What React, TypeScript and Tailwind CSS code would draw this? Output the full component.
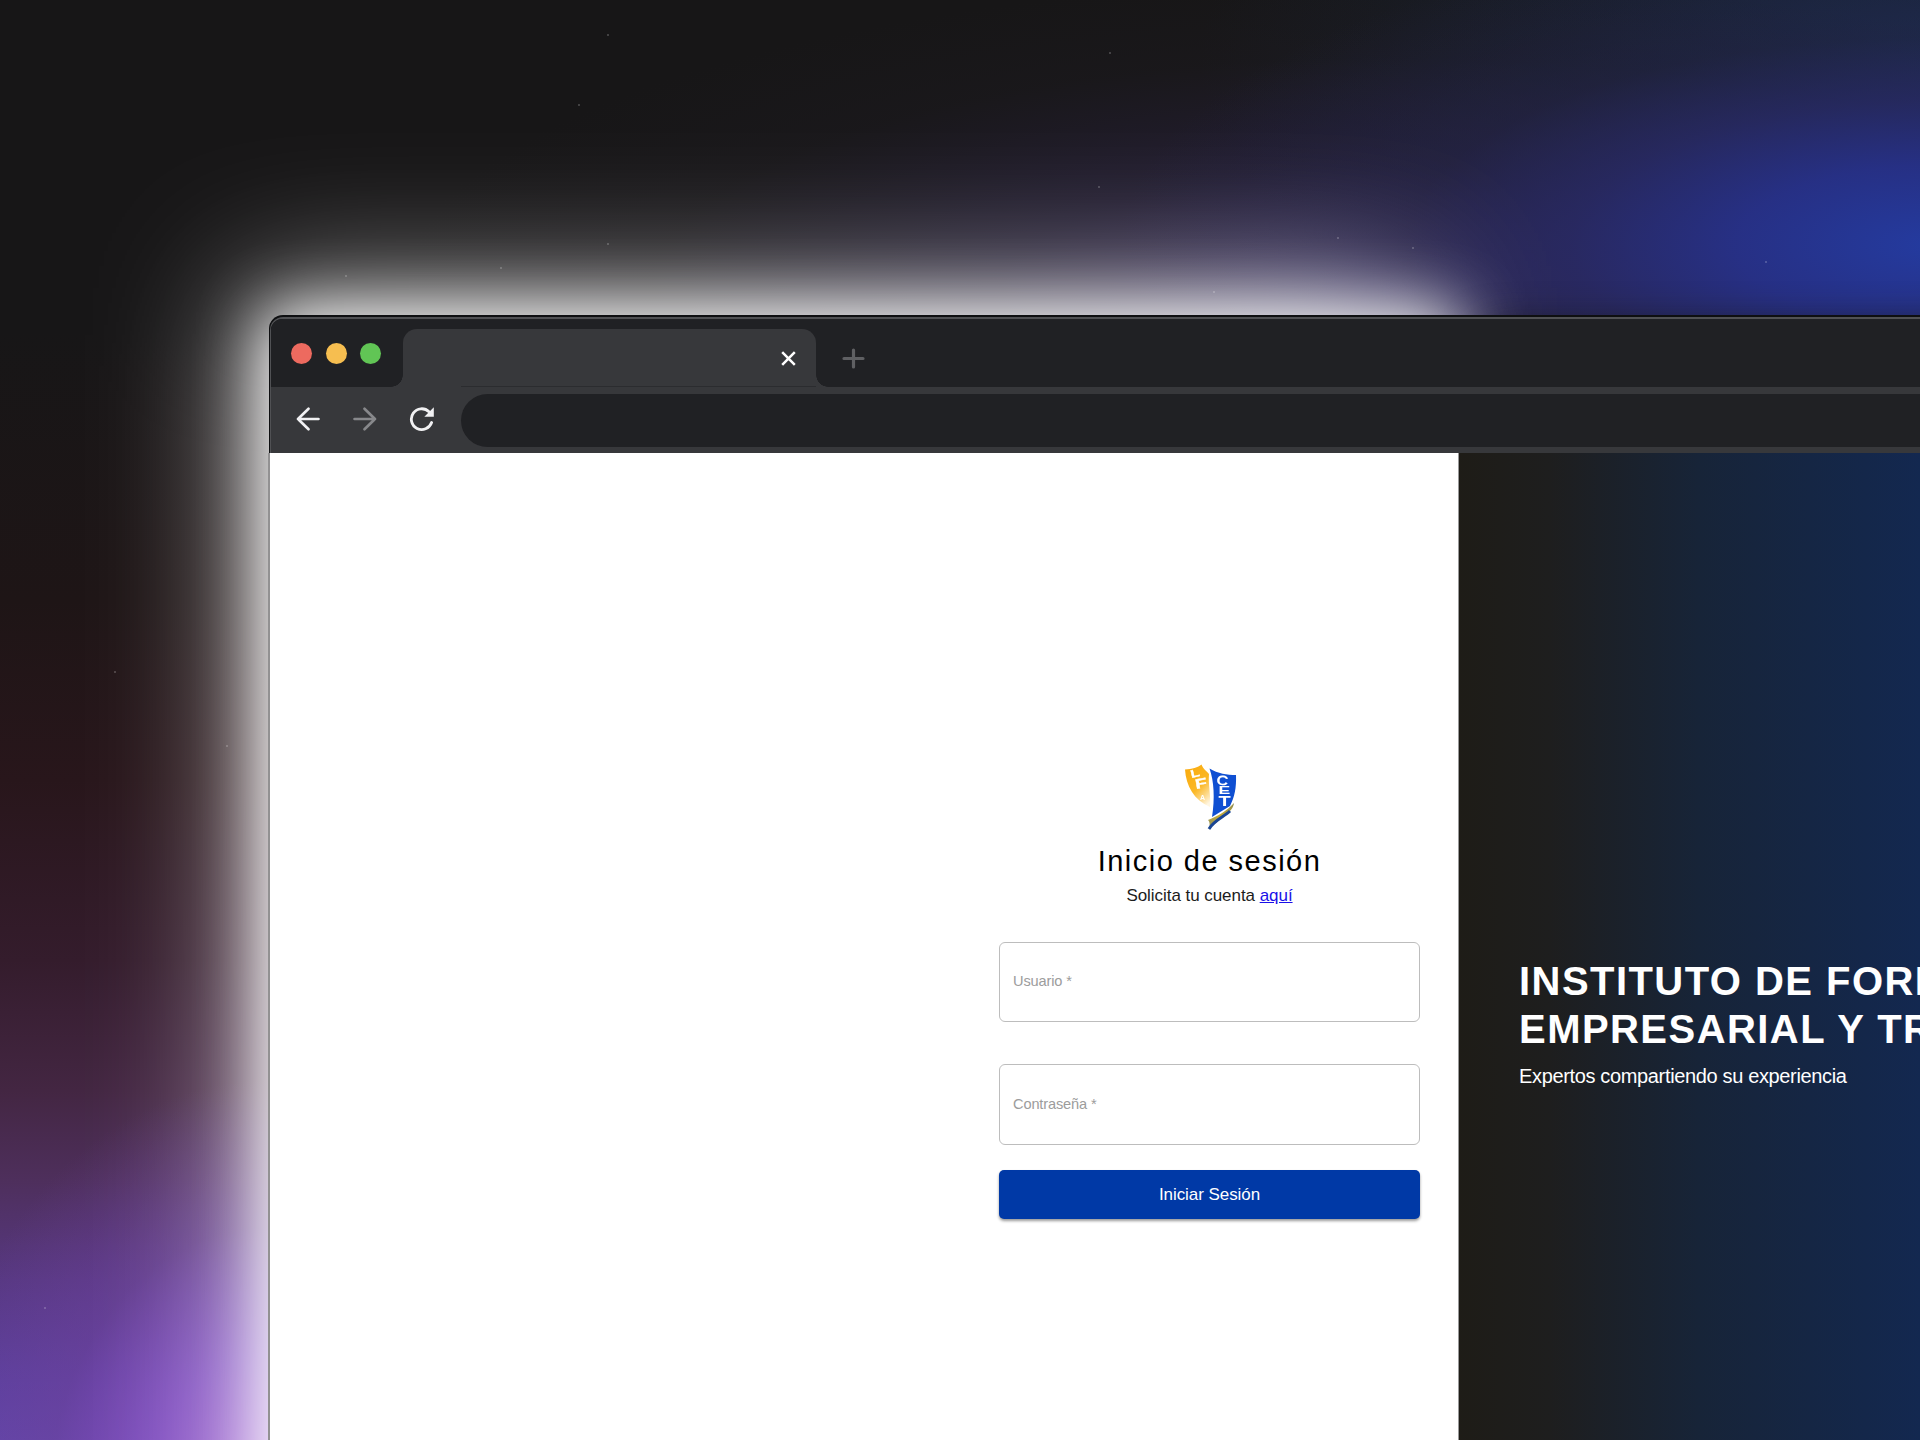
import React from "react";

const stars = [
  [607, 34], [578, 104], [607, 243], [1109, 52], [1337, 237], [1412, 247], [1098, 186], [1765, 261],
  [345, 275], [500, 267], [1213, 291], [114, 671], [226, 745], [44, 1307],
];

function Backdrop() {
  return (
    <div className="absolute inset-0 overflow-hidden bg-[#171617]">
      <div className="absolute inset-x-0 top-0 h-[330px] bg-[radial-gradient(ellipse_760px_330px_at_1960px_60px,#192c48_0%,#1a253a99_50%,transparent_100%)]" />
      <div className="absolute inset-x-0 top-0 h-[330px] bg-[radial-gradient(ellipse_1000px_310px_at_1400px_290px,#352956_0%,#2a224299_40%,#1e1b2255_75%,transparent_100%)]" />
      <div className="absolute inset-x-0 top-0 h-[330px] bg-[radial-gradient(ellipse_820px_320px_at_1940px_245px,#243ba0_0%,#27318aee_25%,#282a68cc_45%,#24254f77_65%,transparent_100%)]" />
      <div className="absolute inset-x-0 bottom-0 h-[1110px] bg-[linear-gradient(180deg,transparent_0px,#1e1516_270px,#28161b_450px,#341c2c_630px,#432642_760px,#4e2f5c_850px,#573882_950px,#5c409e_1050px,#6045a8_1110px)]" />
      <div className="absolute inset-0 bg-[radial-gradient(ellipse_340px_420px_at_270px_1500px,#a462d4_0%,#8650c4dd_35%,#70429e77_65%,transparent_100%)]" />
      <div className="absolute top-[288px] left-[240px] h-[1500px] w-[1170px] bg-white opacity-60 blur-[70px]" />
      <div className="absolute top-[330px] left-[1485px] h-[200px] w-[600px] bg-[#15151c] blur-[20px]" />
      <div className="absolute top-[312px] left-[265px] h-[1500px] w-[1194px] bg-white blur-[33px]" />
      {stars.map(([x, y]) => (
        <div key={`${x}-${y}`} className="absolute size-[2px] rounded-full bg-white/25" style={{ left: x, top: y }} />
      ))}
    </div>
  );
}

function TitleBar() {
  return (
    <div className="flex h-[68px] shrink-0 items-end bg-[#202124]">
      <div className="flex h-full w-[132px] items-center gap-[13.5px] pt-px pl-[20px]">
        <span className="size-[21px] rounded-full bg-[#ed6a5f]" />
        <span className="size-[21px] rounded-full bg-[#f6be50]" />
        <span className="size-[21px] rounded-full bg-[#61c555]" />
      </div>
      <div className="relative flex h-[58px] w-[413px] items-center justify-end rounded-t-[14px] bg-[#37383b] pr-[20px]">
        <div className="absolute bottom-0 -left-3 size-3 bg-[radial-gradient(circle_at_0_0,#202124_11.5px,#37383b_12px)]" />
        <div className="absolute -right-3 bottom-0 size-3 bg-[radial-gradient(circle_at_100%_0,#202124_11.5px,#37383b_12px)]" />
        <div className="absolute right-0 bottom-0 left-[58px] h-px bg-[#2b2c2f]" />
        <svg width="15" height="15" viewBox="0 0 15 15" fill="none" stroke="#fff" strokeWidth="2.5">
          <path d="M1.2 1.2 13.8 13.8M13.8 1.2 1.2 13.8" />
        </svg>
      </div>
      <div className="flex h-[58px] items-center pl-[26px]">
        <svg width="23" height="21" viewBox="0 0 23 21" fill="none" stroke="#5f6063" strokeWidth="3.2" strokeLinecap="round">
          <path d="M2 10.5H21M11.5 2V19" />
        </svg>
      </div>
    </div>
  );
}

function ToolBar() {
  return (
    <div className="flex h-[66px] shrink-0 items-center bg-[#37383b] pl-[25px]">
      <svg className="mr-[33px] mb-[3px]" width="24" height="24" viewBox="0 0 24 24" fill="none" stroke="#f1f1f3" strokeWidth="2.6" strokeLinecap="round" strokeLinejoin="round">
        <path d="M22.5 12H2M12.5 1.7 2 12 12.5 22.3" />
      </svg>
      <svg className="mr-[32px] mb-[3px]" width="24" height="24" viewBox="0 0 24 24" fill="none" stroke="#87888b" strokeWidth="2.6" strokeLinecap="round" strokeLinejoin="round">
        <path d="M1.5 12H22M11.5 1.7 22 12 11.5 22.3" />
      </svg>
      <svg className="mr-[26px] mb-[3px]" width="26" height="26" viewBox="0 0 26 26" fill="none">
        <path d="M22.6 16.5A10.4 10.4 0 1 1 20 5.7" stroke="#f1f1f3" strokeWidth="2.8" strokeLinecap="round" />
        <path d="M24.8 1.3V10.8H15.3Z" fill="#f1f1f3" />
      </svg>
      <div className="h-[53px] flex-1 rounded-l-full bg-[#202124]" />
    </div>
  );
}

function Logo() {
  return (
    <svg width="58" height="70" viewBox="0 0 58 70" className="blur-[0.6px]">
      <defs>
        <linearGradient id="gold" x1="0.2" y1="0" x2="0.8" y2="1">
          <stop offset="0" stopColor="#f9ab0e" />
          <stop offset="0.55" stopColor="#fbb827" />
          <stop offset="0.8" stopColor="#fdd98a" />
          <stop offset="1" stopColor="#fff6e2" />
        </linearGradient>
        <linearGradient id="ribbon" x1="0" y1="1" x2="1" y2="0">
          <stop offset="0" stopColor="#8c8f62" />
          <stop offset="0.5" stopColor="#c9ae35" />
          <stop offset="1" stopColor="#8c8a50" />
        </linearGradient>
      </defs>
      <path d="M4 6.5C11 6 17 4.5 20.5 1.5C22 6 26 8.5 28 11C27 22 30 32 29 44C13 37 5 23 4 6.5Z" fill="url(#gold)" />
      <path d="M28.5 5.5C37 10.5 46 12 55 12C55.5 25 53.5 34 49 43C43 47 37 50 31 54C34 36 33 18 28.5 5.5Z" fill="#0f4fd2" />
      <path d="M27 57C37 53 46 48 53 40C52 50 38 55 28 67C29 62 29 59 27 57Z" fill="url(#ribbon)" />
      <path d="M28 66C33 57 43 54 49 48" stroke="#1a4594" strokeWidth="3" fill="none" />
      <g fill="#fff" fontFamily="Liberation Sans" fontWeight="700">
        <text fontSize="11" stroke="#fff" strokeWidth="0.3" transform="translate(10.5 15) rotate(-14) scale(1.35 1)">L</text>
        <text fontSize="12" stroke="#fff" strokeWidth="0.3" transform="translate(15 26) rotate(-10) scale(1.6 1.15)">F</text>
        <text fontSize="7" transform="translate(19 37)">A</text>
        <text fontSize="11" transform="translate(35 21.5) rotate(6) scale(1.5 1.25)">C</text>
        <text fontSize="8" transform="translate(37.5 30.5) scale(2.2 1.25)">E</text>
        <text fontSize="10" transform="translate(37.5 43) scale(2 1.45)">T</text>
      </g>
    </svg>
  );
}

function Field({ label, className }: { label: string; className: string }) {
  return (
    <label className={`flex w-full items-center rounded-[6px] border-[1.5px] border-[#bdbdbd] pl-[13px] text-[14.6px] tracking-[-0.14px] text-[#9c9c9c] ${className}`}>
      {label}
    </label>
  );
}

function LoginForm() {
  return (
    <main className="flex w-[1189px] shrink-0 flex-col items-end border-r border-[#999] bg-white pt-[310px] pr-[38px]">
      <div className="flex w-[421px] flex-col items-center">
        <Logo />
        <h1 className="mt-[10px] text-[29px] leading-[36px] tracking-[1.48px] whitespace-nowrap text-black">Inicio de sesión</h1>
        <p className="mt-[5px] text-[17px] leading-[24px] tracking-[-0.05px] whitespace-nowrap text-[#1c1c1c]">
          Solicita tu cuenta <a className="text-[#1a10e8] underline">aquí</a>
        </p>
        <Field label="Usuario *" className="mt-[34px] h-[80px]" />
        <Field label="Contraseña *" className="mt-[42px] h-[81px]" />
        <button className="mt-[25px] h-[49px] w-full rounded-[5px] bg-[#0039a6] text-[17px] tracking-[-0.06px] text-white shadow-[0_2px_3px_#00000066]">
          Iniciar Sesión
        </button>
      </div>
    </main>
  );
}

function Hero() {
  return (
    <aside className="min-w-0 flex-1 bg-[linear-gradient(90deg,#1e1c17_0px,#1e1e1e_90px,#172438_240px,#132850_462px)] pt-[504px] pl-[60px] text-white">
      <h2 className="text-[40px] leading-[48px] font-bold tracking-[1.45px] whitespace-nowrap">
        INSTITUTO DE FORMACIÓN
        <br />
        EMPRESARIAL Y TRABAJO
      </h2>
      <p className="mt-[9px] text-[20px] leading-[28px] tracking-[-0.35px] whitespace-nowrap">Expertos compartiendo su experiencia</p>
    </aside>
  );
}

export default function App() {
  return (
    <div className="relative h-[1440px] w-[1920px] overflow-hidden pt-[315px] pl-[269px] font-['Liberation_Sans',Arial,sans-serif]">
      <Backdrop />
      <div className="relative flex h-[1125px] w-[1651px] flex-col">
        <header className="rounded-tl-[14px] border-t-2 border-l border-[#0e0f11] bg-[#0e0f11]">
          <div className="overflow-hidden rounded-tl-[13px] border-t-2 border-l border-[#505154]">
            <TitleBar />
            <ToolBar />
          </div>
        </header>
        <div className="-ml-px flex flex-1 overflow-hidden border-l-2 border-[#929192]">
          <LoginForm />
          <Hero />
        </div>
      </div>
    </div>
  );
}
